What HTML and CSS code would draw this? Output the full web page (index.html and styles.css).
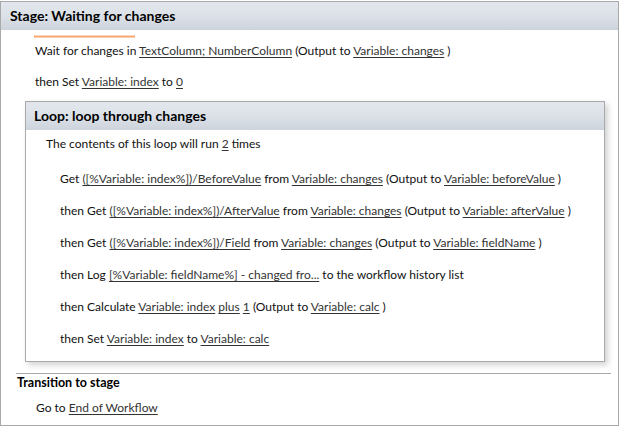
FILE: index.html
```html
<!DOCTYPE html>
<html>
<head>
<meta charset="utf-8">
<link rel="stylesheet" href="styles.css">
</head>
<body>
<div class="stage">
  <div class="stage-head">Stage: Waiting for changes</div>
  <div class="focus-line"></div>
  <div class="row row-first">Wait for changes in <a>TextColumn; NumberColumn</a> (Output to <a>Variable: changes</a> )</div>
  <div class="row row-second">then Set <a>Variable: index</a> to <a>0</a></div>
  <div class="loop">
    <div class="loop-head">Loop: loop through changes</div>
    <div class="loop-body">
      <div class="row loop-note">The contents of this loop will run <a>2</a> times</div>
      <div class="row step step-first">Get <a>([%Variable: index%])/BeforeValue</a> from <a>Variable: changes</a> (Output to <a>Variable: beforeValue</a> )</div>
      <div class="row step">then Get <a>([%Variable: index%])/AfterValue</a> from <a>Variable: changes</a> (Output to <a>Variable: afterValue</a> )</div>
      <div class="row step">then Get <a>([%Variable: index%])/Field</a> from <a>Variable: changes</a> (Output to <a>Variable: fieldName</a> )</div>
      <div class="row step">then Log <a>[%Variable: fieldName%] - changed fro...</a> to the workflow history list</div>
      <div class="row step">then Calculate <a>Variable: index</a> <a>plus</a> <a>1</a> (Output to <a>Variable: calc</a> )</div>
      <div class="row step">then Set <a>Variable: index</a> to <a>Variable: calc</a></div>
    </div>
  </div>
  <div class="transition">
    <div class="trans-head">Transition to stage</div>
    <div class="row trans-row">Go to <a>End of Workflow</a></div>
  </div>
</div>
</body>
</html>
```
FILE: styles.css
```css
html, body {
  margin: 0;
  padding: 0;
  background: #ffffff;
}
body {
  font-family: Lato, "Open Sans", sans-serif;
  font-size: 12px;
  color: #111111;
  width: 620px;
  height: 426px;
  overflow: hidden;
}
.stage {
  box-sizing: border-box;
  margin-top: 1px;
  width: 619px;
  height: 425px;
  border: 1px solid #a9a9a9;
  background: #ffffff;
}
.stage-head {
  height: 28px;
  line-height: 28px;
  padding-left: 9px;
  font-size: 14px;
  font-weight: bold;
  color: #000;
  background: linear-gradient(to bottom, #e3e7ed 0%, #dbe0e7 55%, #cdd3dc 100%);
}
.focus-line {
  position: relative;
  margin: 5px 0 0 33px;
  width: 101px;
  height: 3px;
}
.focus-line::before {
  content: "";
  position: absolute;
  left: 0;
  right: 0;
  top: 1px;
  height: 1px;
  background: #f6a46a;
  box-shadow: 0 1px 0 #fbd2b4, 0 -1px 0 #fbd9c0;
}
.focus-line::after {
  content: "";
  position: absolute;
  left: 0;
  right: 0;
  top: 0;
  height: 3px;
  border-left: 1px solid #f7b88c;
  border-right: 1px solid #f7b88c;
}
.row {
  height: 16px;
  line-height: 16px;
  white-space: nowrap;
}
.row a {
  color: #333333;
  text-decoration: underline;
  text-underline-offset: 2px;
}
.row-first {
  margin-top: 5px;
  padding-left: 34px;
}
.row-second {
  margin-top: 15px;
  padding-left: 34px;
}
.loop {
  box-sizing: border-box;
  margin: 11px 0 0 24px;
  width: 580px;
  height: 261px;
  border: 1px solid #a9a9a9;
  background: #ffffff;
  box-shadow: 3px 3px 6px rgba(0, 0, 0, 0.18);
}
.loop-head {
  height: 28px;
  line-height: 28px;
  padding-left: 8px;
  font-size: 14px;
  font-weight: bold;
  color: #000;
  background: linear-gradient(to bottom, #e3e7ed 0%, #dbe0e7 55%, #cdd3dc 100%);
}
.loop-note {
  margin-top: 6px;
  padding-left: 20px;
}
.step {
  margin-top: 16px;
  padding-left: 34px;
}
.step-first {
  margin-top: 19px;
}
.transition {
  margin: 11px 7px 0 15px;
  border-top: 1px solid #a9a9a9;
}
.trans-head {
  height: 17px;
  line-height: 17px;
  padding-left: 1px;
  font-size: 12.5px;
  font-weight: bold;
  color: #000;
}
.trans-row {
  margin-top: 9px;
  padding-left: 20px;
}
```
